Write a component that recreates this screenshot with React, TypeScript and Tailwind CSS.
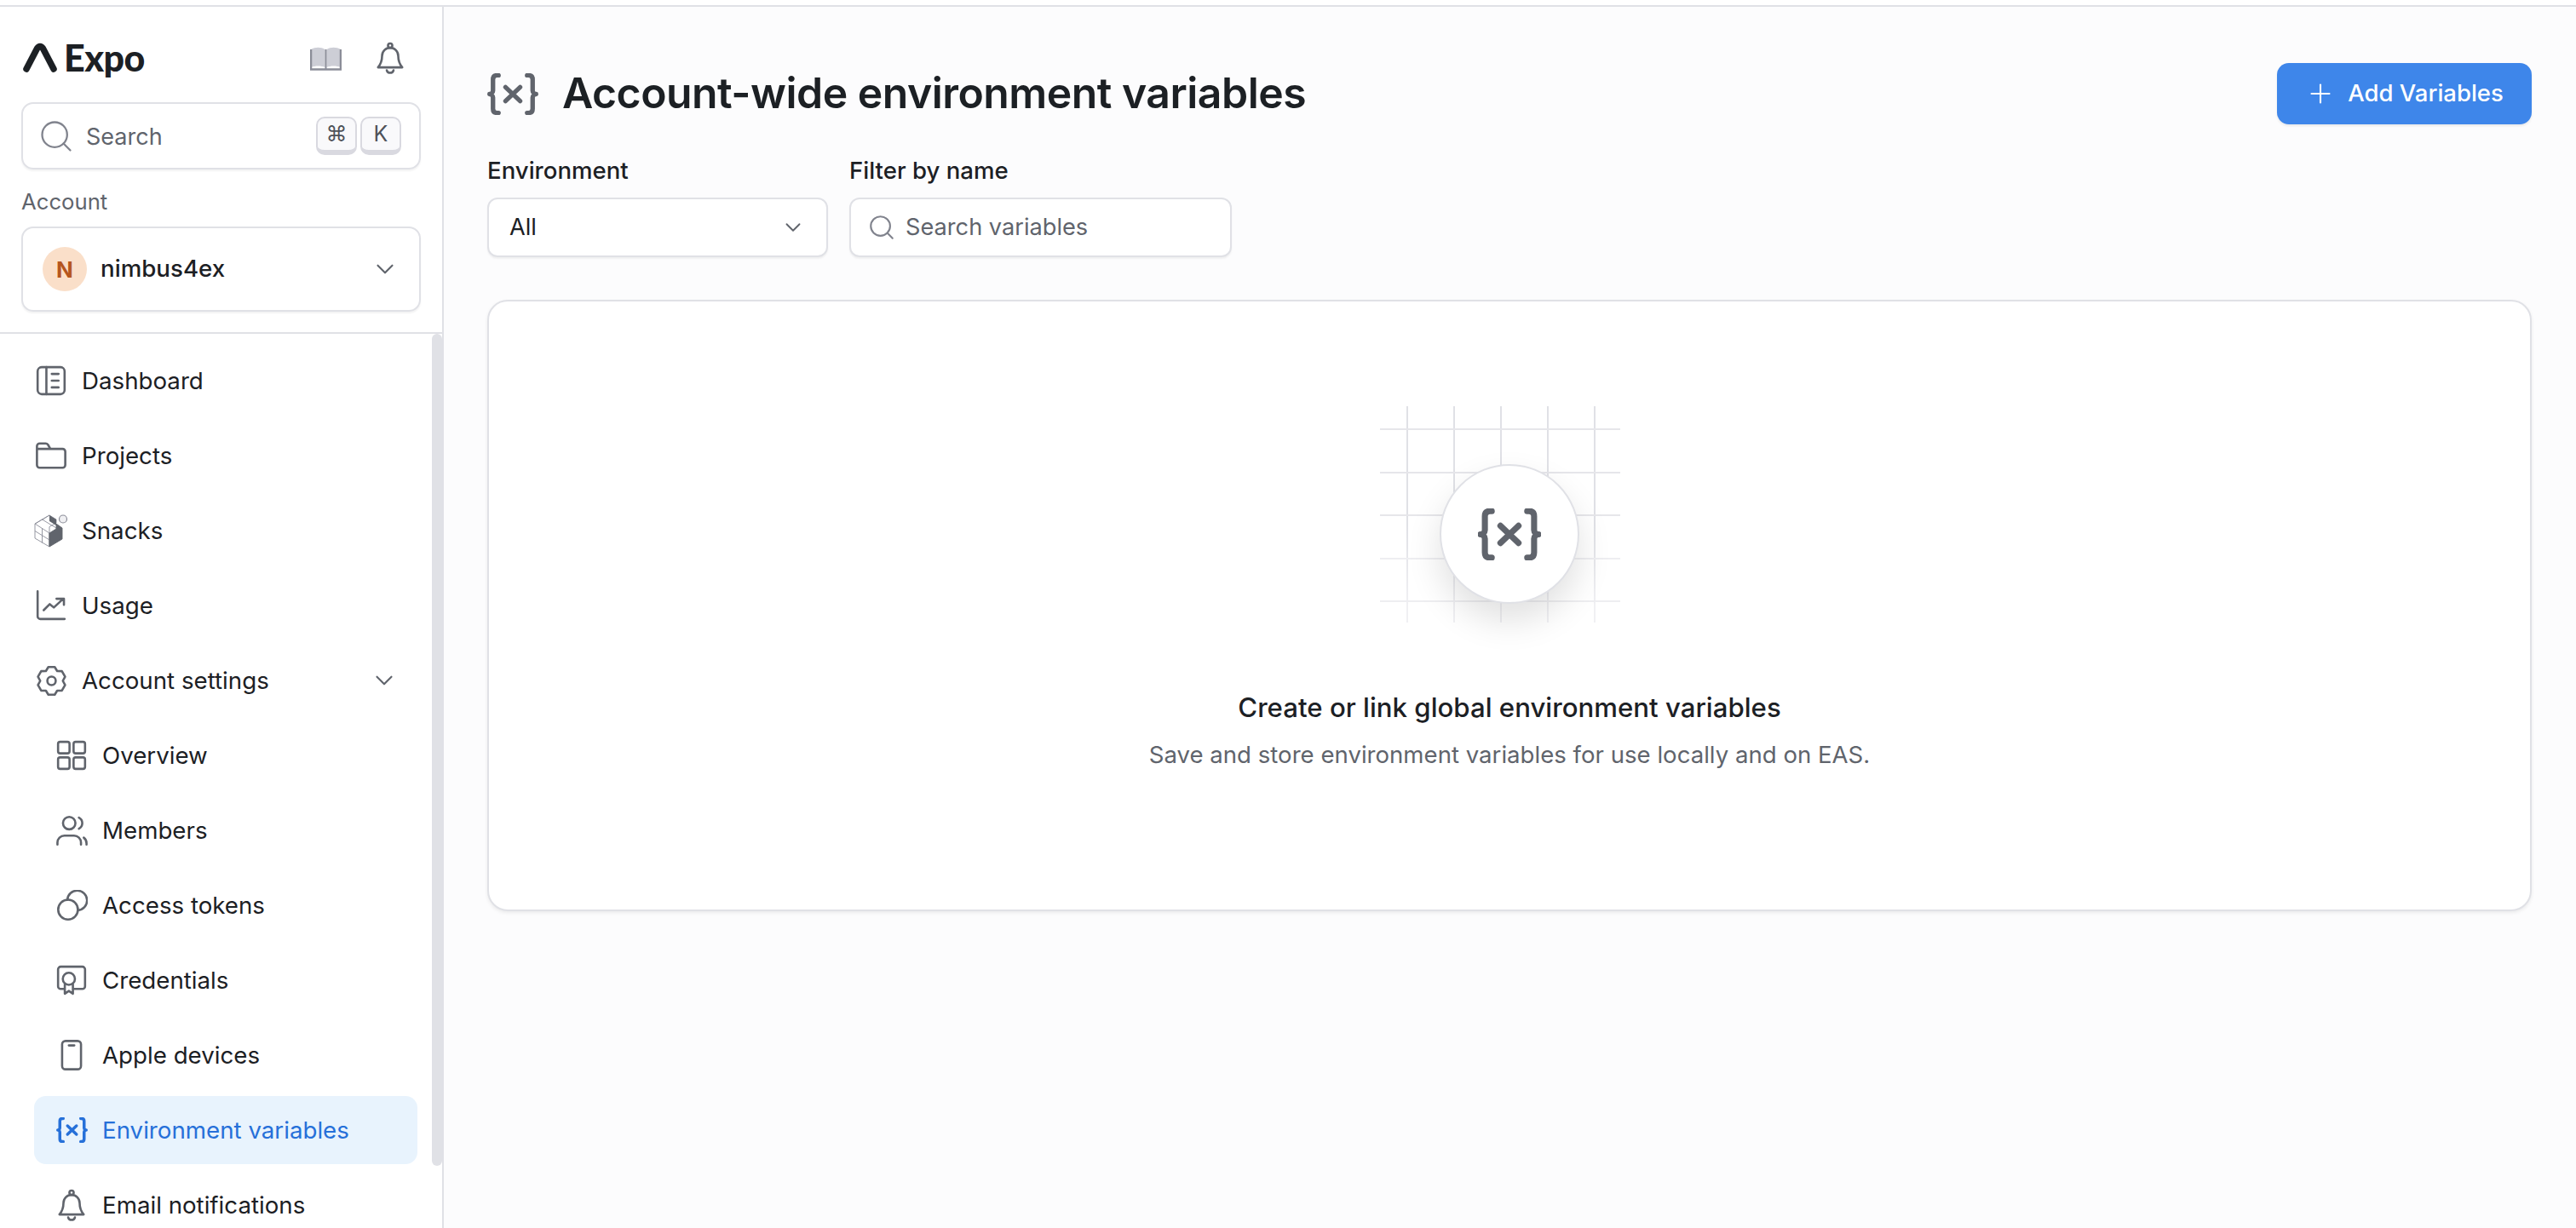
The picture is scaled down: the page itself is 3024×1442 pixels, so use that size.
import { ChevronDown, Plus, Search } from 'lucide-react';
import type { ReactNode } from 'react';

function Icon({ children, size = 38, sw = 2.6 }: { children: ReactNode; size?: number; sw?: number }) {
  return (
    <svg width={size} height={size} viewBox="0 0 24 24" fill="none" stroke="currentColor" strokeWidth={sw * 24 / size} strokeLinecap="round" strokeLinejoin="round" className="shrink-0">
      {children}
    </svg>
  );
}

// {x} mark, used in sidebar, title and the empty state
function VarIcon({ width, height, sw = 6.5 }: { width: number; height: number; sw?: number }) {
  return (
    <svg width={width} height={height} viewBox="0 0 73 60" fill="none" stroke="currentColor" strokeWidth={sw} strokeLinecap="round" strokeLinejoin="round" className="shrink-0">
      <path d="M16 3H14C10 3 8 5 8 9V25C8 28 5 30 3 30C5 30 8 32 8 35V51C8 55 10 57 14 57H16" />
      <path d="M57 3H59C63 3 65 5 65 9V25C65 28 68 30 70 30C68 30 65 32 65 35V51C65 55 63 57 59 57H57" />
      <path d="M26 20L47 40M47 20L26 40" />
    </svg>
  );
}

const gearPoints = Array.from({ length: 6 }, (_, i) => {
  const a = (i * 60 - 90) * Math.PI / 180;
  const d = 13 * Math.PI / 180;
  const v = 30 * Math.PI / 180;
  const p = (r: number, t: number) => `${(12 + r * Math.cos(t)).toFixed(2)},${(12 + r * Math.sin(t)).toFixed(2)}`;
  return `${p(10.8, a - d)} ${p(10.8, a + d)} ${p(8.6, a + v)}`;
}).join(' ');

const BellPaths = () => (
  <>
    <path d="M6 10.5a6 6 0 0 1 12 0c0 4.5 1.6 6.8 3 8.5H3c1.4-1.700 3-4 3-8.500Z" />
    <circle cx="12" cy="2.900" r="1.600" />
    <path d="M9.500 21.200a2.600 2.600 0 0 0 5 0" />
  </>
);

const icons: Record<string, ReactNode> = {
  dashboard: <Icon><rect x="2" y="2" width="20" height="20" rx="3" /><path d="M8.500 2v20M12.500 7h5M12.500 12h5M12.500 17h5" /></Icon>,
  folder: <Icon><path d="M1.500 7V5a2 2 0 0 1 2-2h4.500a2 2 0 0 1 1.600.8L11.500 7H20.500a2 2 0 0 1 2 2v10a2 2 0 0 1-2 2h-17a2 2 0 0 1-2-2V7H11.500" /></Icon>,
  snack: (
    <svg width="40" height="42" viewBox="0 0 40 42" fill="none" stroke="#8b8d98" strokeWidth="0.9" className="shrink-0">
      <path d="M1 13L18 3L26 8V12L18 16.500L18 40L1 30Z" />
      <path d="M1 13L18 24V40M1 21.500L18 32M9.500 8L26 18M18 3L9 8.500M9.500 18.500V35.500M9.500 8L1.500 13" />
      <path d="M18 3L26 8V15L18 10Z" fill="#60646c" stroke="none" />
      <path d="M18 24L26 19V13L33 18V31L18 40Z" fill="#60646c" stroke="#60646c" />
      <circle cx="34" cy="7.500" r="4.500" fill="#f0f0f3" stroke="#8b8d98" strokeWidth="1.200" />
    </svg>
  ),
  usage: <Icon><path d="M2 1.500V20a2 2 0 0 0 2 2h18" /><path d="M6.500 15.500L11 11l3 2.500 7-6.500M16 7h5.500v4.500" /></Icon>,
  gear: <Icon size={37}><polygon points={gearPoints} /><circle cx="12" cy="12" r="3.200" /></Icon>,
  overview: <Icon><rect x="2" y="2" width="8.500" height="8.500" rx="1.500" /><rect x="13.500" y="2" width="8.500" height="8.500" rx="1.500" /><rect x="2" y="13.500" width="8.500" height="8.500" rx="1.500" /><rect x="13.500" y="13.500" width="8.500" height="8.500" rx="1.500" /></Icon>,
  members: <Icon size={39}><circle cx="10" cy="6.500" r="4.500" /><path d="M1.500 22v-1.500a5 5 0 0 1 5-5h7a5 5 0 0 1 5 5V22" /><path d="M17 2.500a4.500 4.500 0 0 1 0 8" /><path d="M22.500 22v-1a5 5 0 0 0-2-4" /></Icon>,
  tokens: <Icon size={37}><circle cx="9" cy="15" r="7.500" /><path d="M8.500 7.500a7.500 7.500 0 1 1 8 8" /></Icon>,
  credential: <Icon><path d="M6 18.500H4a2 2 0 0 1-2-2V4a2 2 0 0 1 2-2h16a2 2 0 0 1 2 2v12.500a2 2 0 0 1-2 2h-6" /><circle cx="10" cy="11" r="4.500" /><path d="M7 15v7l3-2 3 2v-7" /></Icon>,
  phone: <Icon><rect x="5" y="1.500" width="14" height="21" rx="2.500" /><path d="M10 4.800h4" /></Icon>,
  bell: <Icon><BellPaths /></Icon>,
};

const topNav = [
  { label: 'Dashboard', icon: 'dashboard' },
  { label: 'Projects', icon: 'folder' },
  { label: 'Snacks', icon: 'snack' },
  { label: 'Usage', icon: 'usage' },
];

const subNav = [
  { label: 'Overview', icon: 'overview' },
  { label: 'Members', icon: 'members' },
  { label: 'Access tokens', icon: 'tokens' },
  { label: 'Credentials', icon: 'credential' },
  { label: 'Apple devices', icon: 'phone' },
];

function Kbd({ children, className = '' }: { children: ReactNode; className?: string }) {
  return (
    <span className={`flex h-[45px] w-[48px] items-center justify-center rounded-[10px] border-2 border-b-[6px] border-[#d9d9e0] bg-[#f9f9fb] text-[25px] text-[#4f5259] ${className}`}>
      {children}
    </span>
  );
}

function Sidebar() {
  return (
    <aside className="relative flex h-full w-[521px] shrink-0 flex-col overflow-hidden border-r-2 border-[#e0e1e6] bg-white">
      <div className="border-b-2 border-[#e0e1e6] px-[25px] pt-9 pb-6">
        <div className="flex h-12 items-center">
          <svg width="40" height="36" viewBox="0 0 40 36" className="ml-[2px] shrink-0 text-[#1c2024]" fill="none" stroke="currentColor" strokeWidth="7.500" strokeLinecap="round" strokeLinejoin="round">
            <path d="M4 31L16.500 7Q20 2 23.500 7L36 31" />
          </svg>
          <span className="-mt-[2px] ml-2 font-['Lato',sans-serif] text-[43px] leading-none font-black tracking-[-0.5px] text-[#1c2024]">Expo</span>
          <div className="ml-auto flex items-center gap-[38px] pr-[17px]">
            <svg width="37" height="29" viewBox="0 0 37 29" className="shrink-0">
              <path d="M1 4C6 1 13 1 17.500 4V25C13 23 6 23 1 25Z" fill="#cdced6" />
              <path d="M19.500 4C24 1 31 1 36 4V25C31 23 24 23 19.500 25Z" fill="#cdced6" />
              <path d="M1 4V27.500H36V4" fill="none" stroke="#8b8d98" strokeWidth="2.500" />
              <path d="M18.500 4V27" stroke="#8b8d98" strokeWidth="2" />
            </svg>
            <span className="text-[#60646c]"><Icon><BellPaths /></Icon></span>
          </div>
        </div>

        <div className="mt-7 flex h-[79px] items-center rounded-[14px] border-2 border-[#e0e1e6] pr-[21px] pl-[17px] shadow-[0_2px_2px_rgba(0,0,0,0.05)]">
          <Search size={44} strokeWidth={1.25} className="shrink-0 text-[#80838d]" />
          <span className="ml-[13px] pt-[3px] text-[27px] text-[#60646c]">Search</span>
          <div className="ml-auto flex gap-1">
            <Kbd className="font-['DejaVu_Sans',sans-serif]">⌘</Kbd>
            <Kbd>K</Kbd>
          </div>
        </div>

        <div className="mt-5 h-9 text-[25.700px] leading-9 text-[#60646c]">Account</div>

        <div className="mt-[11px] flex h-[100px] items-center rounded-[14px] border-2 border-[#e0e1e6] pr-[23px] pl-[23px] shadow-[0_2px_2px_rgba(0,0,0,0.05)]">
          <span className="flex h-[52px] w-[52px] items-center justify-center rounded-full bg-[#fadfc9] text-[26px] font-bold text-[#b5561e]">N</span>
          <span className="ml-[16px] text-[27.700px] font-medium text-[#1c2024]">nimbus4ex</span>
          <ChevronDown size={34} strokeWidth={1.5} className="ml-auto text-[#60646c]" />
        </div>
      </div>

      <nav className="flex flex-col gap-2 pt-[15px] pr-[29px] pl-[40px]">
        {topNav.map(item => (
          <a key={item.label} className="flex h-20 items-center gap-[19px] rounded-[14px] pl-[3px] text-[27.700px] text-[#1c2024]">
            <span className="flex w-[34px] justify-center text-[#60646c]">{icons[item.icon]}</span>
            <span className="pt-[2px]">{item.label}</span>
          </a>
        ))}
        <a className="flex h-20 items-center gap-[19px] rounded-[14px] pr-[22px] pl-[3px] text-[27.700px] text-[#1c2024]">
          <span className="flex w-[34px] justify-center text-[#60646c]">{icons.gear}</span>
          <span className="pt-[2px]">Account settings</span>
          <ChevronDown size={34} strokeWidth={1.5} className="ml-auto text-[#60646c]" />
        </a>
        {subNav.map(item => (
          <a key={item.label} className="flex h-20 items-center gap-[19px] rounded-[14px] pl-[27px] text-[27.700px] text-[#1c2024]">
            <span className="flex w-[34px] justify-center text-[#60646c]">{icons[item.icon]}</span>
            <span className="pt-[2px]">{item.label}</span>
          </a>
        ))}
        <a className="flex h-20 items-center gap-[19px] rounded-[14px] bg-[#e8f3fd] pl-[27px] text-[27.700px] text-[#2670d9]">
          <span className="flex w-[34px] justify-center"><VarIcon width={37} height={30} sw={7} /></span>
          <span className="pt-[2px]">Environment variables</span>
        </a>
        <a className="flex h-20 items-center gap-[19px] rounded-[14px] pl-[27px] text-[27.700px] text-[#1c2024]">
          <span className="flex w-[34px] justify-center text-[#60646c]">{icons.bell}</span>
          <span className="pt-[2px]">Email notifications</span>
        </a>
      </nav>

      <div className="absolute top-[384px] right-0 h-[977px] w-[12px] rounded-[7px] bg-[#e0e1e6]" />
    </aside>
  );
}

function GridArt() {
  const xs = [49, 104, 159, 214, 269];
  const ys = [26, 77, 127, 178, 228];
  return (
    <svg width="340" height="280" viewBox="0 0 340 280" fill="none" className="absolute inset-0">
      <defs>
        <linearGradient id="fade" x1="0" y1="0" x2="0" y2="1">
          <stop offset="0" stopColor="#e0e1e6" />
          <stop offset="0.55" stopColor="#e0e1e6" />
          <stop offset="0.92" stopColor="#f0f0f3" />
        </linearGradient>
      </defs>
      {xs.map(x => <rect key={x} x={x} y="0" width="2" height="254" fill="url(#fade)" />)}
      {ys.map(y => <rect key={y} x="18" y={y} width="282" height="2" fill={y > 150 ? '#eeeef1' : '#e6e6ea'} />)}
    </svg>
  );
}

export default function App() {
  return (
    <div className="flex h-[1442px] w-[3024px] flex-col overflow-hidden bg-[#fcfcfd] font-['Inter',sans-serif]">
      <div className="h-2 shrink-0 border-b-2 border-[#e0e1e6] bg-white" />
      <div className="flex min-h-0 flex-1">
        <Sidebar />
        <main className="min-w-0 flex-1 pt-[66px] pr-[52px] pl-[51px]">
          <div className="flex h-[72px] items-center">
            <span className="text-[#60646c]"><VarIcon width={60} height={49} sw={6.5} /></span>
            <h1 className="ml-[28px] pb-[2px] text-[49.900px] font-semibold tracking-[-0.5px] text-[#1c2024]">Account-wide environment variables</h1>
            <button className="ml-auto flex h-[72px] w-[299px] items-center justify-center gap-[14px] rounded-[14px] bg-[#3e86ea] text-[27.500px] font-medium text-white shadow-[0_2px_3px_rgba(0,0,0,0.08)]">
              <Plus size={36} strokeWidth={1.4} />
              Add Variables
            </button>
          </div>

          <div className="mt-9 flex gap-[25px]">
            <div className="w-[400px]">
              <div className="h-9 text-[27.600px] leading-9 font-medium text-[#1c2024]">Environment</div>
              <div className="mt-[14px] flex h-[70px] items-center rounded-[12px] border-2 border-[#e0e1e6] bg-white pr-6 pl-[24px] text-[27.200px] text-[#1c2024] shadow-[0_2px_2px_rgba(0,0,0,0.05)]">
                <span className="pt-[1px]">All</span>
                <ChevronDown size={30} strokeWidth={1.5} className="ml-auto text-[#60646c]" />
              </div>
            </div>
            <div className="w-[449px]">
              <div className="h-9 text-[27.600px] leading-9 font-medium text-[#1c2024]">Filter by name</div>
              <div className="mt-[14px] flex h-[70px] items-center rounded-[12px] border-2 border-[#e0e1e6] bg-white pl-[19px] text-[27.200px] text-[#60646c] shadow-[0_2px_2px_rgba(0,0,0,0.05)]">
                <Search size={34} strokeWidth={1.5} className="shrink-0 text-[#80838d]" />
                <span className="ml-[11px] pt-[1px]">Search variables</span>
              </div>
            </div>
          </div>

          <section className="mt-[50px] flex h-[718px] flex-col items-center rounded-[24px] border-2 border-[#e0e1e6] bg-white pt-[123px] shadow-[0_2px_4px_rgba(0,0,0,0.07)]">
            <div className="relative h-[280px] w-[340px]">
              <GridArt />
              <div className="absolute top-[68px] left-[88px] flex h-[164px] w-[164px] items-center justify-center rounded-full border-2 border-[#e0e1e6] bg-white text-[#60646c] shadow-[0_20px_40px_rgba(0,0,0,0.12)]">
                <VarIcon width={74} height={61} sw={7} />
              </div>
            </div>
            <h2 className="mt-[52px] h-11 text-[31.200px] leading-[44px] font-medium text-[#1c2024]">Create or link global environment variables</h2>
            <p className="mt-[13px] text-[27.600px] leading-10 text-[#60646c]">Save and store environment variables for use locally and on EAS.</p>
          </section>
        </main>
      </div>
    </div>
  );
}
